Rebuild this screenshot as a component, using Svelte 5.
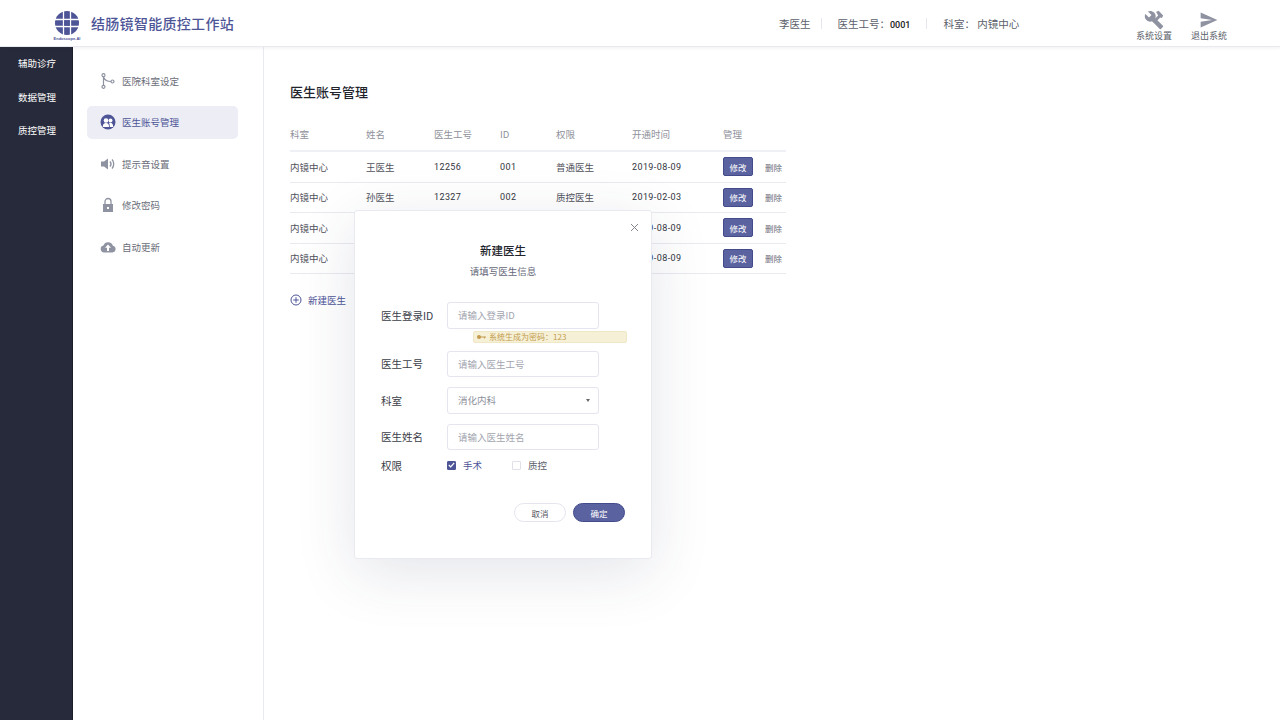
<script lang="ts">
  const mainNav = ['辅助诊疗', '数据管理', '质控管理'];

  const subNav = [
    { key: 'dept', label: '医院科室设定' },
    { key: 'account', label: '医生账号管理', active: true },
    { key: 'sound', label: '提示音设置' },
    { key: 'lock', label: '修改密码' },
    { key: 'update', label: '自动更新' }
  ];

  const columns = ['科室', '姓名', '医生工号', 'ID', '权限', '开通时间', '管理'];

  const doctors = [
    { dept: '内镜中心', name: '王医生', no: '12256', id: '001', role: '普通医生', date: '2019-08-09' },
    { dept: '内镜中心', name: '孙医生', no: '12327', id: '002', role: '质控医生', date: '2019-02-03' },
    { dept: '内镜中心', name: '李医生', no: '12256', id: '003', role: '普通医生', date: '2019-08-09' },
    { dept: '内镜中心', name: '赵医生', no: '12256', id: '004', role: '普通医生', date: '2019-08-09' }
  ];
</script>

<div class="page">
  <header class="topbar">
    <div class="brand">
      <div class="logo">
        <svg width="26" height="26" viewBox="0 0 26 26">
          <circle cx="13" cy="13" r="12" fill="#4d5597" />
          <path d="M9.5 0v26M16.5 0v26M0 9.5h26M0 16.5h26" stroke="#fff" stroke-width="1.3" />
          <rect x="10.2" y="10.2" width="5.6" height="5.6" fill="#4d5597" />
        </svg>
        <span class="logo-text">Endoscope-AI</span>
      </div>
      <h1>结肠镜智能质控工作站</h1>
    </div>
    <div class="user-info">
      <span class="user-name">李医生</span>
      <span class="sep"></span>
      <span class="user-no">医生工号：<b>0001</b></span>
      <span class="sep"></span>
      <span class="user-dept">科室：&nbsp;内镜中心</span>
    </div>
    <div class="top-actions">
      <div class="top-action">
        <svg width="20" height="20" viewBox="0 0 24 24" fill="#8f92a1">
          <path d="M22.7 19l-9.1-9.1c.9-2.300.4-5-1.500-6.900-2-2-5-2.400-7.400-1.300L9 6 6 9 1.600 4.700C.4 7.100.9 10.100 2.900 12.100c1.900 1.900 4.600 2.400 6.900 1.500l9.100 9.100c.4.400 1 .4 1.400 0l2.300-2.300c.5-.4.5-1.100.1-1.400z" />
          <path d="M14.500 2.500l3-1.500 5.500 5.500-1.500 3-2-.5-7 7-2.500-2.500 7-7z" />
        </svg>
        <span>系统设置</span>
      </div>
      <div class="top-action">
        <svg width="20" height="20" viewBox="0 0 24 24" fill="#8f92a1">
          <path d="M2 3l20 9-20 9v-7l14-2-14-2z" />
        </svg>
        <span>退出系统</span>
      </div>
    </div>
  </header>

  <div class="body">
    <nav class="main-nav">
      {#each mainNav as item}
        <a class="main-item">{item}</a>
      {/each}
    </nav>

    <aside class="sub-nav">
      {#each subNav as item}
        <div class="sub-item" class:active={item.active}>
          <span class="sub-icon">
            {#if item.key === 'dept'}
              <svg width="16" height="16" viewBox="0 0 16 16" fill="none" stroke="#8f92a1" stroke-width="1.2">
                <circle cx="3.500" cy="2.200" r="1.500" />
                <circle cx="3.500" cy="13.800" r="1.500" />
                <circle cx="12.500" cy="8.500" r="1.500" />
                <path d="M3.500 3.700v8.600M3.800 4.500c1 2.800 3.500 4 7.200 4" />
              </svg>
            {:else if item.key === 'account'}
              <svg width="16" height="16" viewBox="0 0 16 16">
                <circle cx="8" cy="8" r="7.500" fill="#4d5597" />
                <circle cx="6" cy="6.500" r="2.300" fill="#fff" />
                <circle cx="10.500" cy="6.500" r="2" fill="#fff" />
                <path d="M2.800 13c0-3 1.200-4 3.200-4s3 1 3 4zM9.800 13c0-2-.2-3-.8-4 2.500-.6 4.200.8 4.200 4z" fill="#fff" />
              </svg>
            {:else if item.key === 'sound'}
              <svg width="16" height="16" viewBox="0 0 16 16" fill="#8f92a1">
                <path d="M1 5.500h3L8 2.500v11L4 10.500H1z" />
                <path d="M10 5.500c1.200 1.400 1.200 3.600 0 5M12 3.500c2.300 2.500 2.300 6.500 0 9" fill="none" stroke="#8f92a1" stroke-width="1.300" />
              </svg>
            {:else if item.key === 'lock'}
              <svg width="16" height="16" viewBox="0 0 16 16" fill="#8f92a1">
                <path d="M5 7V4.500a3 3 0 0 1 6 0V7" fill="none" stroke="#8f92a1" stroke-width="1.300" />
                <path fill-rule="evenodd" d="M3 7h10v8H3zM7 10v2h2v-2z" />
              </svg>
            {:else}
              <svg width="16" height="16" viewBox="0 0 16 16" fill="#8f92a1">
                <path fill-rule="evenodd" d="M4 13.500a3.500 3.500 0 0 1-.6-6.900 5 5 0 0 1 9.500.2A3.400 3.400 0 0 1 12.500 13.500zM8 5.500L5 8.800h2V12h2V8.800h2z" />
              </svg>
            {/if}
          </span>
          <span>{item.label}</span>
        </div>
      {/each}
    </aside>

    <main class="content">
      <h2>医生账号管理</h2>
      <div class="table">
        <div class="row head">
          {#each columns as col}
            <span>{col}</span>
          {/each}
        </div>
        {#each doctors as doc}
          <div class="row">
            <span class="muted">{doc.dept}</span>
            <span class="muted">{doc.name}</span>
            <span class="num">{doc.no}</span>
            <span class="num">{doc.id}</span>
            <span class="muted">{doc.role}</span>
            <span class="num">{doc.date}</span>
            <span class="ops">
              <button class="edit-btn">修改</button>
              <button class="del-btn">删除</button>
            </span>
          </div>
        {/each}
      </div>
      <div class="add-row">
        <svg width="12" height="12" viewBox="0 0 12 12" fill="none" stroke="#4d5597" stroke-width="1">
          <circle cx="6" cy="6" r="5" />
          <path d="M3.200 6h5.600M6 3.200v5.600" />
        </svg>
        <span>新建医生</span>
      </div>
    </main>
  </div>

  <div class="modal">
    <button class="close" aria-label="关闭">
      <svg width="9" height="9" viewBox="0 0 9 9" stroke="#85878f" stroke-width="1" fill="none">
        <path d="M1 1l7 7M8 1l-7 7" />
      </svg>
    </button>
    <div class="modal-title">新建医生</div>
    <div class="modal-sub">请填写医生信息</div>

    <div class="field first">
      <label>医生登录ID</label>
      <div class="input placeholder">请输入登录ID</div>
    </div>
    <div class="hint">
      <svg width="9" height="6" viewBox="0 0 9 6" fill="#c39a4e">
        <circle cx="2" cy="3" r="2" />
        <path d="M3 2.400h6v1.200H8v1H7v-1H3z" />
      </svg>
      <span>系统生成为密码：123</span>
    </div>
    <div class="field second">
      <label>医生工号</label>
      <div class="input placeholder">请输入医生工号</div>
    </div>
    <div class="field">
      <label>科室</label>
      <div class="input select">
        <span>消化内科</span>
        <i class="caret"></i>
      </div>
    </div>
    <div class="field">
      <label>医生姓名</label>
      <div class="input placeholder">请输入医生姓名</div>
    </div>
    <div class="field perms">
      <label>权限</label>
      <div class="checks">
        <span class="check on">
          <span class="box">
            <svg width="7" height="6" viewBox="0 0 7 6" fill="none" stroke="#fff" stroke-width="1.200">
              <path d="M.8 3l1.900 1.900L6.200.8" />
            </svg>
          </span>
          手术
        </span>
        <span class="check">
          <span class="box"></span>
          质控
        </span>
      </div>
    </div>
    <div class="modal-actions">
      <button class="btn-cancel">取消</button>
      <button class="btn-ok">确定</button>
    </div>
  </div>
</div>

<style>
  :global(body) {
    margin: 0;
    background: #fff;
    font-family: "Noto Sans CJK SC", "Noto Sans", sans-serif;
  }

  .page {
    width: 1280px;
    height: 720px;
    overflow: hidden;
    position: relative;
    display: flex;
    flex-direction: column;
  }

  .topbar {
    height: 46px;
    flex-shrink: 0;
    display: flex;
    align-items: center;
    background: #fff;
    border-bottom: 1px solid #e9eaf0;
    box-shadow: 0 1px 3px rgba(60, 64, 90, 0.08);
    position: relative;
  }

  .brand {
    display: flex;
    align-items: center;
    width: 779px;
    padding-left: 54px;
    box-sizing: border-box;
  }

  .logo {
    width: 26px;
    display: flex;
    flex-direction: column;
    align-items: center;
    margin-right: 11px;
    margin-top: 6px;
  }

  .logo-text {
    font-family: "Liberation Sans", sans-serif;
    font-size: 4px;
    line-height: 6px;
    font-weight: 700;
    color: #4d5597;
    white-space: nowrap;
  }

  h1 {
    margin: 0;
    font-size: 14px;
    font-weight: 500;
    color: #4d5597;
    letter-spacing: 0.3px;
  }

  .user-info {
    display: flex;
    align-items: center;
    font-size: 10.500px;
    color: #5c5f6b;
    width: 355px;
  }

  .sep {
    width: 1px;
    height: 11px;
    background: #e6e7ee;
  }

  .user-name {
    margin-right: 10px;
  }

  .user-no {
    margin: 0 16px 0 16px;
  }

  .user-no b {
    font-family: "Roboto", sans-serif;
    font-size: 9px;
    font-weight: 500;
    color: #222;
  }

  .user-dept {
    margin-left: 16px;
  }

  .top-actions {
    display: flex;
    gap: 17px;
    margin-left: 1px;
  }

  .top-action {
    width: 38px;
    display: flex;
    flex-direction: column;
    align-items: center;
    font-size: 9px;
    line-height: 12px;
    color: #5c5f6b;
    white-space: nowrap;
    padding-top: 6px;
  }

  .body {
    flex: 1;
    display: flex;
    min-height: 0;
  }

  .main-nav {
    width: 73px;
    flex-shrink: 0;
    background: #262a3a;
    border-right: 1px solid #1b1e2a;
    box-sizing: border-box;
    padding: 0 0 0 18px;
    display: flex;
    flex-direction: column;
    gap: 0;
  }

  .main-item {
    height: 33.500px;
    line-height: 33.500px;
    font-size: 9.500px;
    color: #fff;
    white-space: nowrap;
  }

  .sub-nav {
    width: 191px;
    flex-shrink: 0;
    box-sizing: border-box;
    border-right: 1px solid #e9eaf0;
    padding: 17px 25px 0 14px;
    display: flex;
    flex-direction: column;
    gap: 8.500px;
  }

  .sub-item {
    height: 33px;
    display: flex;
    align-items: center;
    gap: 6px;
    padding-left: 13px;
    border-radius: 5px;
    font-size: 9.500px;
    color: #6b6d78;
  }

  .sub-item.active {
    background: #ecedf5;
    color: #4d5597;
  }

  .sub-icon {
    width: 16px;
    height: 16px;
    display: flex;
  }

  .content {
    flex: 1;
    padding: 35px 0 0 26px;
    min-width: 0;
  }

  h2 {
    margin: 0 0 25px;
    height: 20px;
    line-height: 20px;
    font-size: 13px;
    font-weight: 500;
    color: #22242c;
  }

  .table {
    width: 496px;
  }

  .row {
    display: grid;
    grid-template-columns: 76px 68px 66px 56px 76px 91px 63px;
    align-items: center;
    height: 30.500px;
    border-bottom: 1px solid #e9eaf0;
    box-sizing: border-box;
    font-size: 9.500px;
    color: #4a4c56;
  }

  .row.head {
    height: 25px;
    color: #8f919b;
    border-bottom: 2px solid #eff0f6;
    padding-bottom: 9px;
  }

  .num {
    font-family: "Roboto", sans-serif;
    font-size: 9px;
    letter-spacing: 0.4px;
    color: #33353d;
  }

  .muted {
    color: #4f515b;
  }

  .ops {
    display: flex;
    align-items: center;
    justify-content: space-between;
    padding-right: 4px;
  }

  button {
    font-family: inherit;
    cursor: pointer;
  }

  .edit-btn {
    width: 30px;
    height: 19px;
    padding: 0;
    border: 1px solid #434b8b;
    border-radius: 2px;
    background: #5a62a0;
    color: #fff;
    font-size: 8.500px;
  }

  .del-btn {
    border: none;
    background: none;
    padding: 0;
    font-size: 8.500px;
    color: #6b6d78;
  }

  .add-row {
    display: flex;
    align-items: center;
    gap: 6px;
    margin-top: 19px;
    font-size: 9.500px;
    color: #4d5597;
    line-height: 14px;
  }

  .modal {
    position: absolute;
    left: 354px;
    top: 210px;
    width: 298px;
    height: 349px;
    box-sizing: border-box;
    background: #fff;
    border: 1px solid #e9eaf0;
    border-radius: 3px;
    box-shadow: 0 14px 60px rgba(50, 54, 90, 0.13);
    padding: 31px 26px 0;
  }

  .close {
    position: absolute;
    top: 12px;
    right: 12px;
    width: 9px;
    height: 9px;
    padding: 0;
    border: none;
    background: none;
    display: flex;
  }

  .modal-title {
    text-align: center;
    font-size: 11.500px;
    line-height: 16px;
    color: #22242c;
    font-weight: 500;
  }

  .modal-sub {
    text-align: center;
    margin-top: 6px;
    font-size: 9.500px;
    line-height: 14px;
    color: #66687a;
  }

  .field {
    display: flex;
    align-items: center;
    margin-top: 10px;
  }

  .field.first {
    margin-top: 24px;
  }

  .field.second {
    margin-top: 8px;
  }

  .field label {
    width: 66px;
    flex-shrink: 0;
    font-size: 10.500px;
    color: #3c3e48;
    white-space: nowrap;
  }

  .input {
    width: 152px;
    height: 26.500px;
    box-sizing: border-box;
    border: 1px solid #e4e5ee;
    border-radius: 3px;
    padding: 0 10px;
    display: flex;
    align-items: center;
    font-size: 9.500px;
    color: #a3a5af;
  }

  .select {
    justify-content: space-between;
    padding-right: 8px;
    color: #8d8f9a;
  }

  .caret {
    width: 0;
    height: 0;
    border-left: 2.500px solid transparent;
    border-right: 2.500px solid transparent;
    border-top: 3px solid #666;
  }

  .hint {
    width: 154px;
    height: 12px;
    box-sizing: border-box;
    margin: 2px 0 0 92px;
    padding-left: 3px;
    display: flex;
    align-items: center;
    gap: 3px;
    background: #f6f1d6;
    border: 1px solid #efe8c6;
    border-radius: 2px;
    font-size: 8px;
    color: #c39a4e;
    white-space: nowrap;
  }

  .perms {
    margin-top: 7px;
    height: 16px;
  }

  .checks {
    display: flex;
    font-size: 9.500px;
    color: #5c5f6b;
  }

  .check {
    width: 65px;
    display: flex;
    align-items: center;
    gap: 7px;
  }

  .check.on {
    color: #4d5597;
  }

  .box {
    width: 9px;
    height: 9px;
    box-sizing: border-box;
    border: 1px solid #dfe0e8;
    border-radius: 1px;
    display: flex;
    align-items: center;
    justify-content: center;
  }

  .check.on .box {
    background: #4d5597;
    border-color: #4d5597;
  }

  .modal-actions {
    display: flex;
    justify-content: flex-end;
    gap: 7px;
    margin: 30px 0 0;
  }

  .modal-actions button {
    width: 52px;
    height: 19px;
    padding: 0;
    border-radius: 10px;
    font-size: 8.500px;
  }

  .btn-cancel {
    background: #fff;
    border: 1px solid #e4e5ee;
    color: #55575f;
  }

  .btn-ok {
    background: #5a62a0;
    border: 1px solid #434b8b;
    color: #fff;
  }
</style>
